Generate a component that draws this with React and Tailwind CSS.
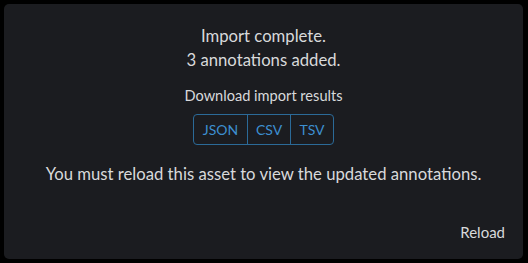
export default function App() {
  return (
    <div className="w-[528px] h-[263px] bg-black p-1" style={{ fontFamily: 'Lato, "Noto Sans", sans-serif' }}>
      <div className="w-[519px] h-[255px] bg-[#1b1c20] rounded-[5px] flex flex-col items-center text-[#d8d9db]">
        <div className="mt-[20px] text-[16.7px] leading-[24px] text-center">
          <div>Import complete.</div>
          <div>3 annotations added.</div>
        </div>
        <div className="mt-[14px] text-[14.6px] leading-[20px]">Download import results</div>
        <div className="mt-[8px] flex border border-[#2b6a98] rounded-[4px] text-[#3d8fd0] text-[14px] h-[31px]">
          <button className="w-[54px] border-r border-[#2b6a98]">JSON</button>
          <button className="w-[43px] border-r border-[#2b6a98]">CSV</button>
          <button className="w-[42px]">TSV</button>
        </div>
        <div className="mt-[17px] text-[16.7px] leading-[24px]">You must reload this asset to view the updated annotations.</div>
        <div className="self-end mt-auto mb-[15px] mr-[18px] text-[15px] leading-[24px]">Reload</div>
      </div>
    </div>
  );
}
